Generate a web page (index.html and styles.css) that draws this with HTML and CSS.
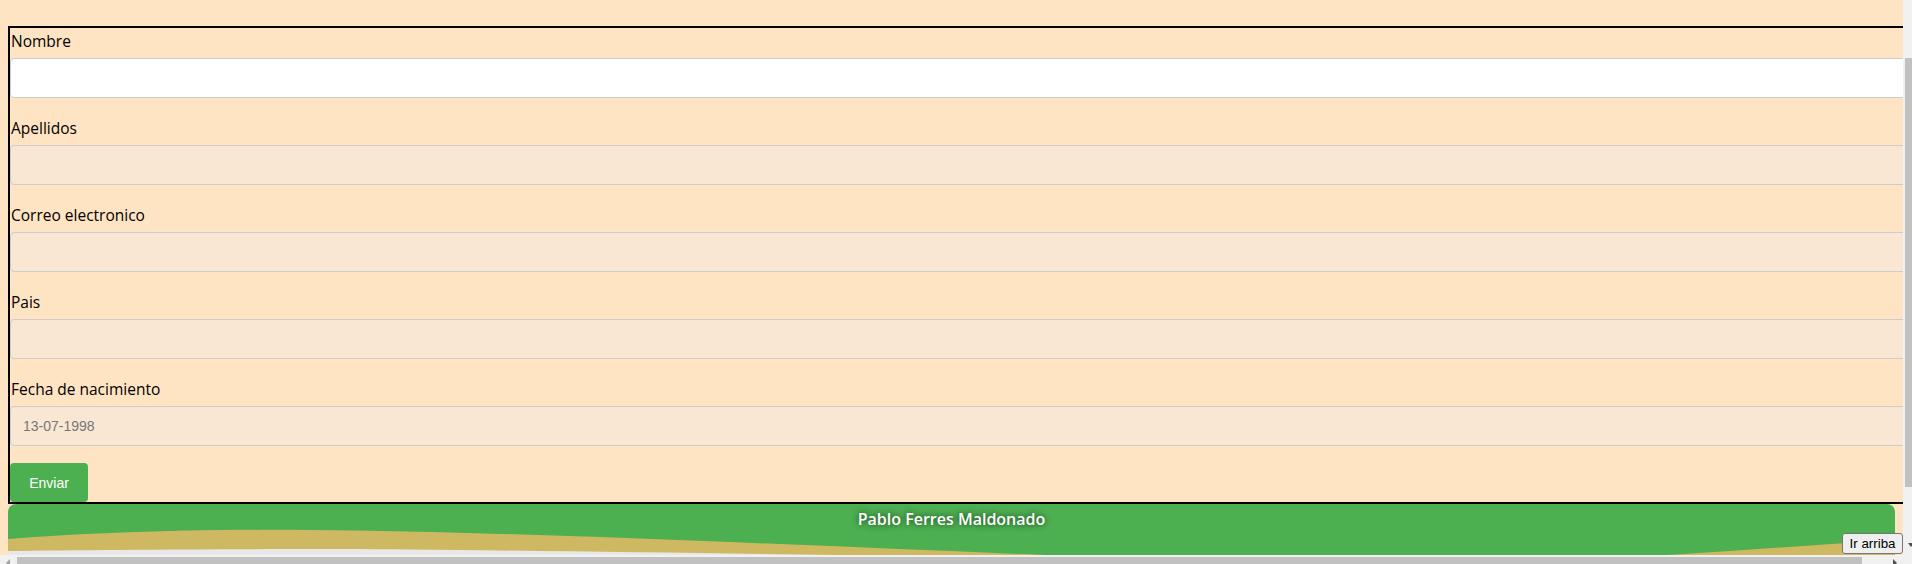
FILE: index.html
```html
<!DOCTYPE html>
<html lang="es">
<head>
<meta charset="utf-8">
<title>Formulario</title>
<link rel="stylesheet" href="styles.css">
</head>
<body>
<div class="window">
  <div class="viewport">
    <form class="box">
      <div class="field">
        <label class="label">Nombre</label>
        <input class="input input-white" type="text">
      </div>
      <div class="field">
        <label class="label">Apellidos</label>
        <input class="input" type="text">
      </div>
      <div class="field">
        <label class="label">Correo electronico</label>
        <input class="input" type="text">
      </div>
      <div class="field">
        <label class="label">Pais</label>
        <input class="input" type="text">
      </div>
      <div class="field">
        <label class="label">Fecha de nacimiento</label>
        <input class="input input-date" type="text" value="13-07-1998">
      </div>
      <button class="submit" type="button">Enviar</button>
    </form>
    <footer class="footer">
      <svg class="waves" viewBox="0 0 1887 51" preserveAspectRatio="none" aria-hidden="true">
        <path fill="#CEB862" d="M0,35 C80,29 180,25 300,26 C520,28 760,40 1050,51.5 L1650,51.5 C1720,48 1800,41 1887,36 L1887,51.5 L0,51.5 Z"/>
        <path fill="#E8E8E8" d="M0,47 C100,45.5 300,44.5 400,45.5 C550,47 750,50 900,52 L0,52 Z"/>
      </svg>
      <p class="footer-text">Pablo Ferres Maldonado</p>
    </footer>
  </div>
  <div class="vscroll">
    <div class="vthumb"></div>
    <span class="arrow-down"></span>
  </div>
  <div class="hscroll">
    <span class="arrow-left"></span>
    <div class="hthumb"></div>
    <span class="arrow-right"></span>
  </div>
  <div class="corner"></div>
  <button class="top-btn" type="button">Ir arriba</button>
</div>
</body>
</html>
```

FILE: styles.css
```css
html, body {
  margin: 0;
  padding: 0;
  height: 564px;
  overflow: hidden;
}

.window {
  display: grid;
  grid-template-columns: 1903px 9px;
  grid-template-rows: 555px 9px;
  width: 1912px;
  height: 564px;
  background: #FFE4C4;
}

.viewport {
  overflow: hidden;
  background: #FFE4C4;
  padding-top: 26px;
  box-sizing: border-box;
}

.box {
  box-sizing: border-box;
  margin-left: 8px;
  width: 1912px;
  border: 2px solid #000;
  padding: 0;
  height: 478px;
}

.field {
  display: flex;
  flex-direction: column;
}

.label {
  box-sizing: border-box;
  font-family: "Open Sans", sans-serif;
  font-size: 15.5px;
  font-weight: 500;
  line-height: 18px;
  height: 22px;
  padding: 4px 0 0 1px;
  color: #000;
}

.input {
  box-sizing: border-box;
  width: 100%;
  height: 40px;
  margin: 8px 0 17px 0;
  border: 1px solid #ccc;
  border-radius: 4px;
  background: #F9E6D3;
  padding: 0 12px;
  font-family: "Liberation Sans", Arial, sans-serif;
  font-size: 14px;
  color: #777;
  outline: none;
}

.input-white {
  background: #fff;
}

.submit {
  display: block;
  height: 39px;
  width: 78px;
  margin: 0;
  padding: 0;
  border: none;
  border-radius: 4px;
  background: #4CAF50;
  color: #fff;
  font-family: "Liberation Sans", Arial, sans-serif;
  font-size: 14px;
}

.footer {
  position: relative;
  margin: 0 8px;
  height: 51px;
  background: #4CAF50;
  border-radius: 8px 8px 0 0;
  overflow: hidden;
}

.waves {
  position: absolute;
  left: 0;
  top: 0;
  width: 100%;
  height: 100%;
  display: block;
}

.footer-text {
  position: relative;
  margin: 0;
  padding-top: 4px;
  text-align: center;
  font-family: "Open Sans", sans-serif;
  font-size: 16px;
  font-weight: 600;
  line-height: 22px;
  color: #fff;
  text-shadow: 0 0 6px rgba(0, 0, 0, 0.7);
}

.vscroll {
  position: relative;
  background: #F1F1F1;
  padding: 58px 0 0 2px;
  box-sizing: border-box;
}

.vthumb {
  width: 7px;
  height: 429px;
  background: #C1C1C1;
}

.arrow-down {
  position: absolute;
  left: 5px;
  top: 543px;
  width: 0;
  height: 0;
  border-left: 3px solid transparent;
  border-right: 3px solid transparent;
  border-top: 4px solid #505050;
}

.hscroll {
  position: relative;
  background: #F1F1F1;
  padding: 2px 0 0 17px;
  box-sizing: border-box;
}

.hthumb {
  width: 1845px;
  height: 7px;
  background: #C1C1C1;
}

.arrow-left {
  position: absolute;
  left: 6px;
  top: 4px;
  width: 0;
  height: 0;
  border-top: 4px solid transparent;
  border-bottom: 4px solid transparent;
  border-right: 4px solid #A3A3A3;
}

.arrow-right {
  position: absolute;
  left: 1893px;
  top: 4px;
  width: 0;
  height: 0;
  border-top: 4px solid transparent;
  border-bottom: 4px solid transparent;
  border-left: 4px solid #505050;
}

.corner {
  background: #F1F1F1;
}

.top-btn {
  position: fixed;
  right: 9px;
  bottom: 10px;
  width: 61px;
  height: 21px;
  box-sizing: border-box;
  padding: 0;
  border: 1px solid #767676;
  border-radius: 3px;
  background: #EFEFEF;
  color: #000;
  font-family: "Liberation Sans", Arial, sans-serif;
  font-size: 13.33px;
  line-height: 19px;
}
```
